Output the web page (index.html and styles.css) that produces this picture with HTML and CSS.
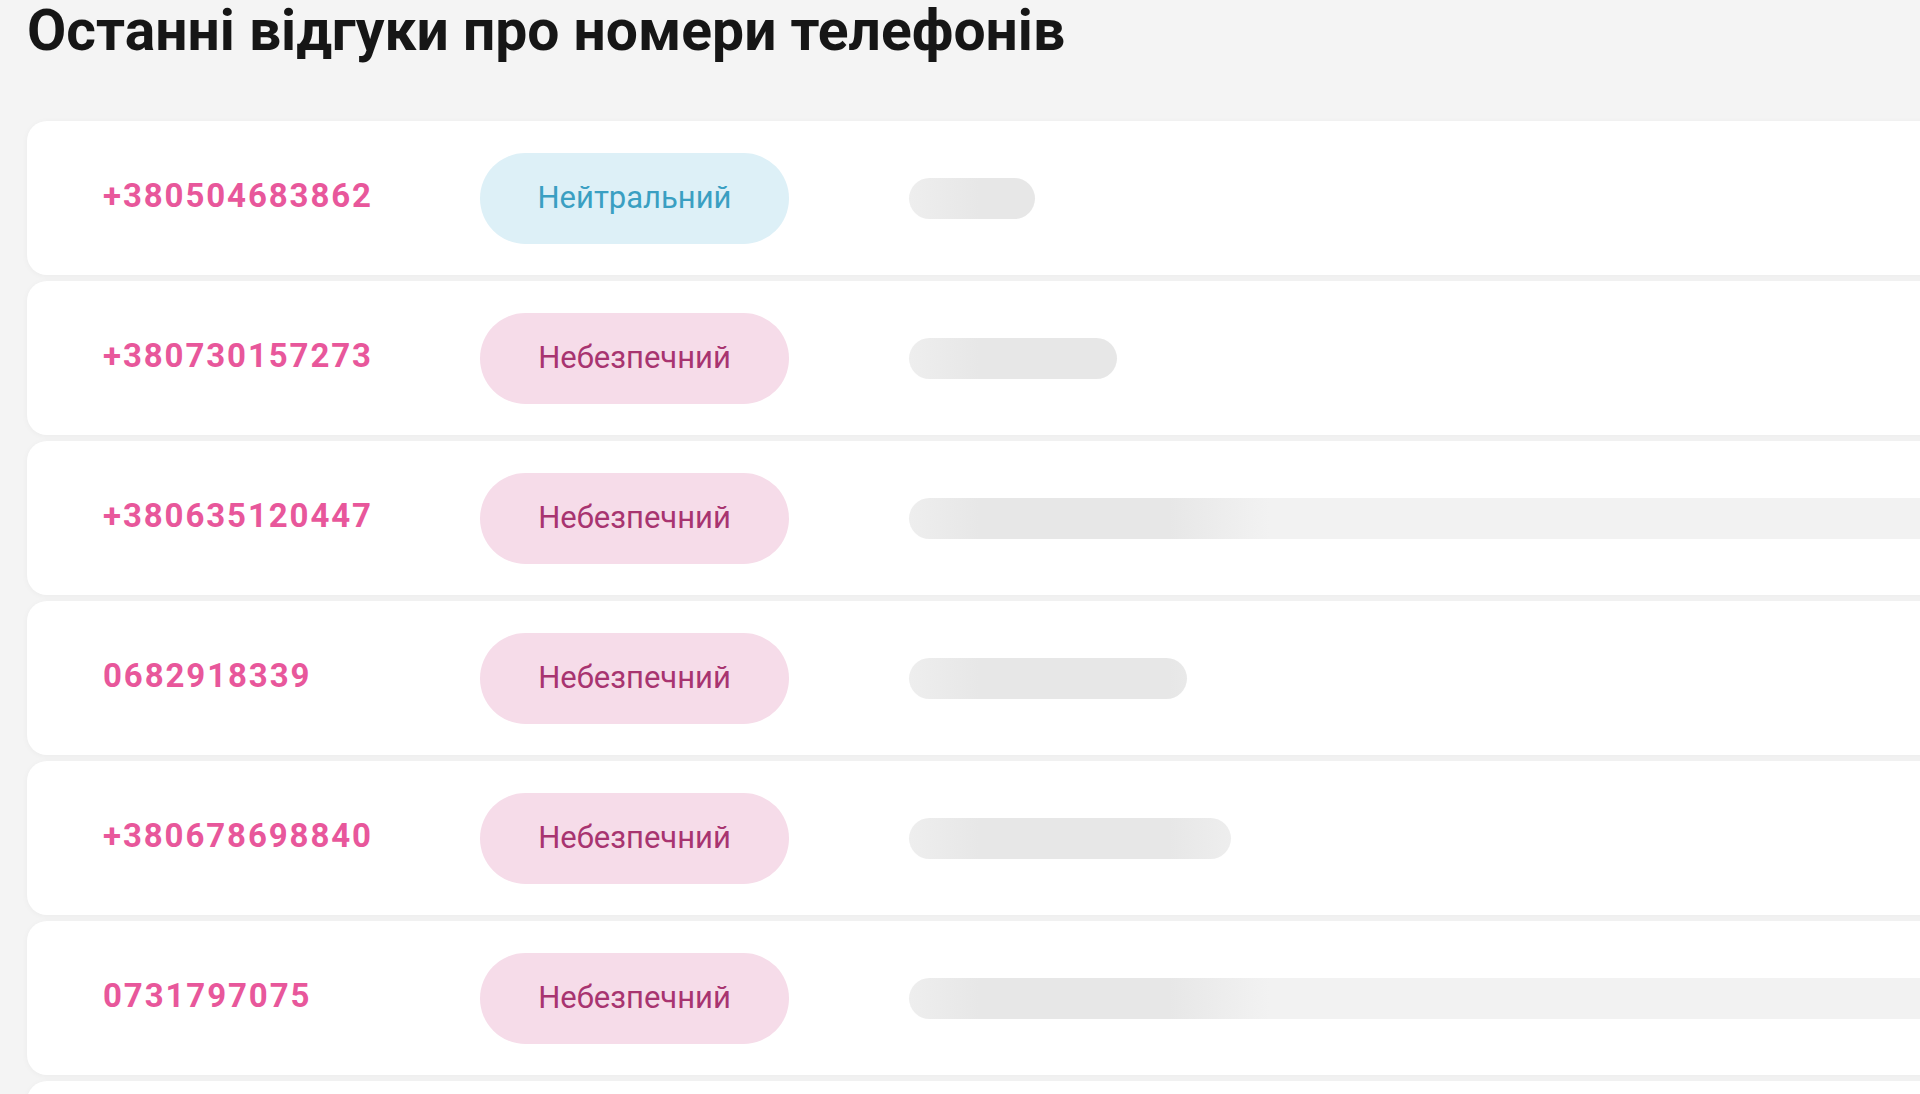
FILE: index.html
```html
<!DOCTYPE html>
<html lang="uk">
<head>
<meta charset="utf-8">
<title>Останні відгуки про номери телефонів</title>
<link rel="stylesheet" href="styles.css">
</head>
<body>
<main class="page">
  <h1 class="title">Останні відгуки про номери телефонів</h1>
  <ul class="reviews">
    <li class="card">
      <a class="phone">+380504683862</a>
      <div class="badge-cell"><span class="badge badge-neutral">Нейтральний</span></div>
      <div class="skeleton" style="width:126px"></div>
    </li>
    <li class="card">
      <a class="phone">+380730157273</a>
      <div class="badge-cell"><span class="badge badge-danger">Небезпечний</span></div>
      <div class="skeleton" style="width:208px"></div>
    </li>
    <li class="card">
      <a class="phone">+380635120447</a>
      <div class="badge-cell"><span class="badge badge-danger">Небезпечний</span></div>
      <div class="skeleton" style="width:1200px"></div>
    </li>
    <li class="card">
      <a class="phone">0682918339</a>
      <div class="badge-cell"><span class="badge badge-danger">Небезпечний</span></div>
      <div class="skeleton" style="width:278px"></div>
    </li>
    <li class="card">
      <a class="phone">+380678698840</a>
      <div class="badge-cell"><span class="badge badge-danger">Небезпечний</span></div>
      <div class="skeleton" style="width:322px"></div>
    </li>
    <li class="card">
      <a class="phone">0731797075</a>
      <div class="badge-cell"><span class="badge badge-danger">Небезпечний</span></div>
      <div class="skeleton" style="width:1200px"></div>
    </li>
    <li class="card card-empty"></li>
  </ul>
</main>
</body>
</html>
```

FILE: styles.css
```css
html, body {
  margin: 0;
  padding: 0;
  background: #f4f4f4;
  overflow: hidden;
}

.page {
  padding: 2px 0 0 27px;
  font-family: Roboto, "Liberation Sans", Arial, sans-serif;
}

.title {
  margin: 0 0 62px 0;
  font-size: 57px;
  line-height: 57px;
  font-weight: 700;
  color: #161616;
  white-space: nowrap;
}

.reviews {
  list-style: none;
  margin: 0;
  padding: 0;
  display: flex;
  flex-direction: column;
  gap: 6px;
}

.card {
  width: 2300px;
  height: 154px;
  box-sizing: border-box;
  background: #ffffff;
  border-radius: 20px;
  box-shadow: 0 1px 6px rgba(0, 0, 0, 0.04);
  display: grid;
  grid-template-columns: 377px 429px 1fr;
  align-items: center;
  padding-left: 76px;
}

.phone {
  display: block;
  font-size: 33px;
  line-height: 40px;
  font-weight: 700;
  color: #e8579b;
  letter-spacing: 1.9px;
  text-decoration: none;
  padding-bottom: 5px;
}

.badge-cell {
  display: flex;
}

.badge {
  width: 309px;
  height: 91px;
  border-radius: 46px;
  display: flex;
  align-items: center;
  justify-content: center;
  font-size: 31px;
  font-weight: 400;
  padding-bottom: 2px;
  box-sizing: border-box;
}

.badge-neutral {
  background: #ddf0f7;
  color: #3a9fc2;
}

.badge-danger {
  background: #f6dce9;
  color: #a83470;
}

.skeleton {
  height: 41px;
  border-radius: 21px;
  background: linear-gradient(90deg, #eeeeee 0px, #e7e7e7 70px, #e7e7e7 260px, #f2f2f2 360px, #f2f2f2 100%);
}
```
